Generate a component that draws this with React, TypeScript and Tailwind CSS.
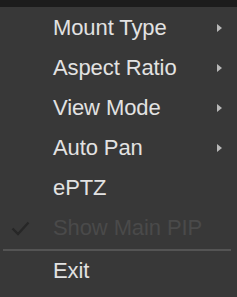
type Item = { label: string; sub?: boolean; checked?: boolean; disabled?: boolean };

const items: Item[] = [
  { label: "Mount Type", sub: true },
  { label: "Aspect Ratio", sub: true },
  { label: "View Mode", sub: true },
  { label: "Auto Pan", sub: true },
  { label: "ePTZ" },
  { label: "Show Main PIP", checked: true, disabled: true },
];

function Row({ item }: { item: Item }) {
  return (
    <div className="flex h-10 items-center">
      <div className="flex w-[53px] shrink-0 items-center pl-[11px]">
        {item.checked && (
          <svg width="19" height="15" viewBox="0 0 19 15" fill="none" className="mt-[1px]">
            <path d="M1.5 7.5 L7 13 L17.5 1.5" stroke="#272727" strokeWidth="2.4" />
          </svg>
        )}
      </div>
      <span
        className={
          "flex-1 text-[22px] leading-none tracking-[-0.1px] " +
          (item.disabled ? "text-[#4a4a4a]" : "text-[#e2e2e2]")
        }
      >
        {item.label}
      </span>
      {item.sub && (
        <span className="mr-[15px] h-0 w-0 border-y-[4px] border-l-[5px] border-y-transparent border-l-[#b8b8b8]" />
      )}
    </div>
  );
}

export default function App() {
  return (
    <div className="h-[297px] w-[237px] bg-[#383838] font-['Liberation_Sans',Arial,sans-serif]">
      <div className="h-[7px] bg-[#1c1c1c]" />
      <div className="pt-[1px]">
        {items.map((item) => (
          <Row item={item} key={item.label} />
        ))}
      </div>
      <div className="mx-[3px] mt-[1px] mr-[6px] h-[2px] bg-[#545454]" />
      <Row item={{ label: "Exit" }} />
    </div>
  );
}
